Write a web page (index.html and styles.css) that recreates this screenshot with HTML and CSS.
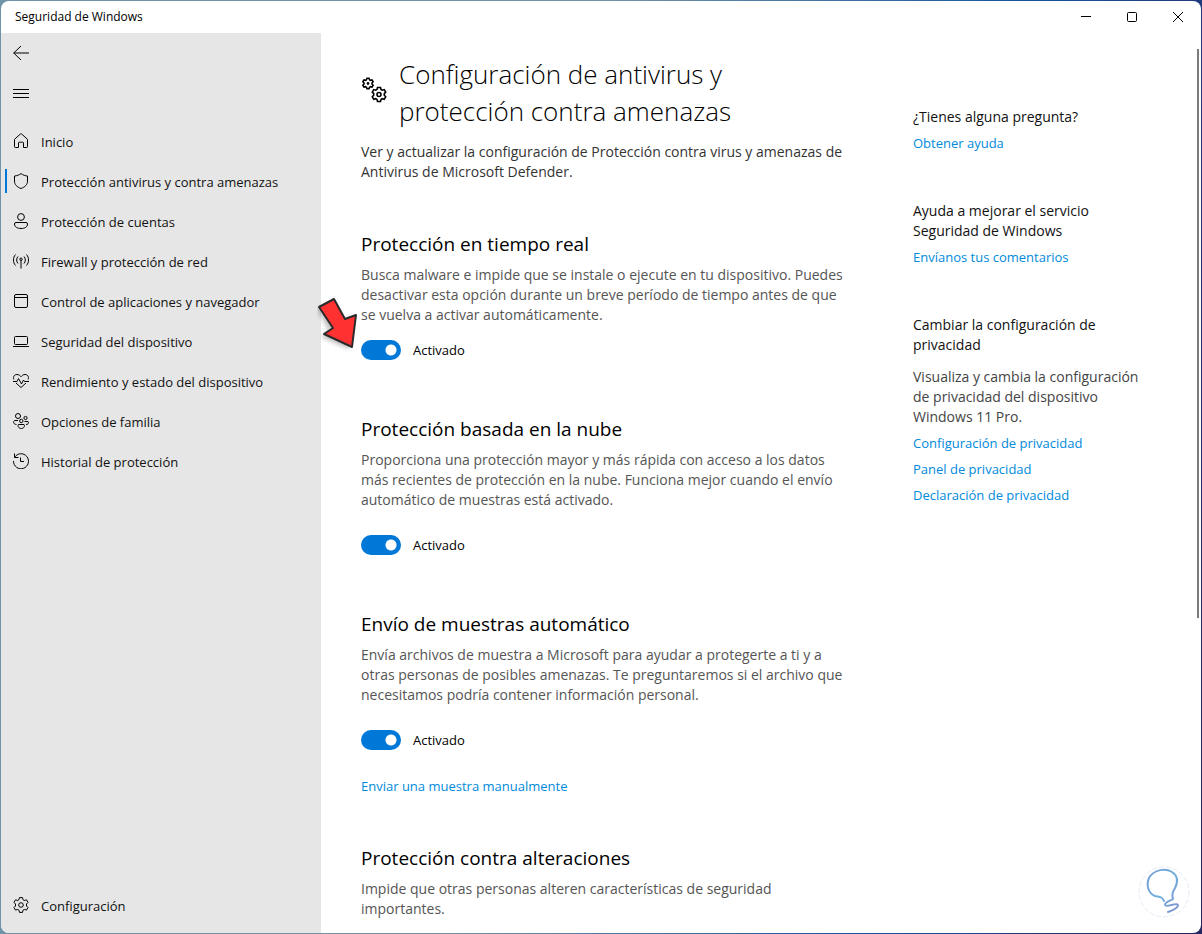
FILE: index.html
```html
<!DOCTYPE html>
<html lang="es">
<head>
<meta charset="utf-8">
<meta name="viewport" content="width=device-width, initial-scale=1">
<title>Seguridad de Windows</title>
<link rel="stylesheet" href="styles.css">
</head>
<body>
<div class="window">
  <header class="titlebar">
    <span class="app-name">Seguridad de Windows</span>
    <div class="window-controls">
      <button type="button" aria-label="Minimizar"><svg width="16" height="16" viewBox="0 0 16 16"><path d="M3 7.5h10"/></svg></button>
      <button type="button" aria-label="Maximizar"><svg width="16" height="16" viewBox="0 0 16 16"><rect x="3.5" y="3.5" width="9" height="9" rx="1"/></svg></button>
      <button type="button" aria-label="Cerrar"><svg width="16" height="16" viewBox="0 0 16 16"><path d="M3 3l10 10M13 3L3 13"/></svg></button>
    </div>
  </header>
  <div class="body">
    <nav class="sidebar" aria-label="Navegación">
      <button class="icon-button" type="button" aria-label="Atrás"><svg class="icon" viewBox="0 0 16 16"><path d="M16 8H.7M8 1L.7 8 8 15"/></svg></button>
      <button class="icon-button" type="button" aria-label="Menú"><svg class="icon" viewBox="0 0 16 16"><path d="M0 4.5h16M0 8.5h16M0 12.5h16"/></svg></button>
      <ul class="nav-list">
        <li><a class="nav-item" href="#inicio"><svg class="icon" viewBox="0 0 16 16"><path d="M1.500 6.300L7.400 1a.9.9 0 0 1 1.200 0l5.900 5.300V13.700a.8.8 0 0 1-.8.8h-3.200V10a.8.8 0 0 0-.8-.8H6.300a.8.8 0 0 0-.8.8v4.500H2.300a.8.8 0 0 1-.8-.8z"/></svg>Inicio</a></li>
        <li><a class="nav-item active" href="#antivirus" aria-current="page"><svg class="icon" viewBox="0 0 16 16"><path d="M8 .6c2 1.500 4.200 2.200 6.500 2.400V8c0 3.700-2.500 6-6.500 7.500C4 14 1.500 11.700 1.500 8V3C3.800 2.800 6 2.100 8 .6z"/></svg>Protección antivirus y contra amenazas</a></li>
        <li><a class="nav-item" href="#cuentas"><svg class="icon" viewBox="0 0 16 16"><circle cx="8" cy="4" r="3.400"/><path d="M3 9.500h10a1.500 1.500 0 0 1 1.500 1.500c0 3-2.800 4.500-6.500 4.500S1.500 14 1.500 11A1.500 1.500 0 0 1 3 9.500z"/></svg>Protección de cuentas</a></li>
        <li><a class="nav-item" href="#firewall"><svg class="icon" viewBox="0 0 16 16"><path d="M2.500 1.500c-2.700 3-2.700 8 0 11M13.500 1.500c2.700 3 2.700 8 0 11M5 3.500c-1.800 2-1.800 5 0 7M11 3.500c1.800 2 1.800 5 0 7M8 7v8.500"/><circle cx="8" cy="6.200" r="1.200"/></svg>Firewall y protección de red</a></li>
        <li><a class="nav-item" href="#control"><svg class="icon" viewBox="0 0 16 16"><rect x="1.500" y="1.500" width="13" height="13" rx="1.500"/><path d="M1.500 4.500h13"/></svg>Control de aplicaciones y navegador</a></li>
        <li><a class="nav-item" href="#dispositivo"><svg class="icon" viewBox="0 0 16 16"><rect x="1.500" y="3.500" width="13" height="8" rx="1"/><path d="M0 13.500h16"/></svg>Seguridad del dispositivo</a></li>
        <li><a class="nav-item" href="#rendimiento"><svg class="icon" viewBox="0 0 16 16"><path d="M.9 6.500C-.3 3.500 1.500 1.500 4 1.500c1.800 0 3 1 4 2.200 1-1.200 2.200-2.200 4-2.200 2.500 0 4.300 2 3.100 5M3 10l5 4.500 5-4.500M0 8.500h4l1.500-3 3 5.500 2-4 1 1.500H16"/></svg>Rendimiento y estado del dispositivo</a></li>
        <li><a class="nav-item" href="#familia"><svg class="icon" viewBox="0 0 16 16"><circle cx="5" cy="3" r="2.500"/><circle cx="12.500" cy="5" r="1.600"/><circle cx="8.300" cy="8" r="1.700"/><path d="M5 7.500H1.500c-2 1.500-.5 4 2 4M11.500 8.500h3.500c1.200 1.500 0 3.200-2 3M5.500 11.500h5.500c1.200 1.500 0 4-2.700 4s-4-2.500-2.800-4z"/></svg>Opciones de familia</a></li>
        <li><a class="nav-item" href="#historial"><svg class="icon" viewBox="0 0 16 16"><path d="M1.500 4.500A7.500 7.500 0 1 1 .5 8M1.500.500v4h4M7.500 4.500v4h3.500"/></svg>Historial de protección</a></li>
      </ul>
      <a class="nav-item settings" href="#configuracion"><svg class="icon" viewBox="0 0 16 16"><path d="M6.500 .6h3l.5 2.100 1.300.8 2.200-.7 1.500 2.600L13.500 7v2l1.500 1.500-1.500 2.600-2.200-.7-1.300.8-.5 2.200h-3L6 13.200l-1.300-.8-2.200.7L1 10.500 2.500 9V7L1 5.400l1.500-2.600 2.200.7L6 2.700z"/><circle cx="8" cy="8" r="2.300"/></svg>Configuración</a>
    </nav>
    <div class="page">
      <main class="content">
        <div class="page-title">
          <svg class="title-icon" viewBox="0 0 26 26"><path d="M16.500 10.500h3l.5 2 1.200.7 2-.6 1.500 2.500-1.400 1.500v1.700l1.400 1.500-1.500 2.500-2-.6-1.200.7-.5 2.100h-3l-.5-2.100-1.200-.7-2 .6-1.500-2.500 1.400-1.500v-1.700l-1.400-1.500 1.500-2.500 2 .6 1.200-.7z"/><circle cx="18" cy="17.500" r="2"/><path d="M6 1.300h2l.5 1.500.9.500 1.600-.4 1.100 1.800L11 6v1l1.100 1.300L11 10.100l-1.600-.4-.9.500-.5 1.500H6l-.5-1.500-.9-.5-1.600.4L1.900 8.300 3 7V6L1.900 4.700 3 2.900l1.600.4.900-.5z"/><circle cx="7" cy="6.500" r=".6"/></svg>
          <h1>Configuración de antivirus y protección contra amenazas</h1>
        </div>
        <p class="intro">Ver y actualizar la configuración de Protección contra virus y amenazas de Antivirus de Microsoft Defender.</p>

        <section class="setting compact">
          <h2>Protección en tiempo real</h2>
          <p>Busca malware e impide que se instale o ejecute en tu dispositivo. Puedes desactivar esta opción durante un breve período de tiempo antes de que se vuelva a activar automáticamente.</p>
          <div class="switch-row">
            <label class="switch"><input type="checkbox" role="switch" checked>Activado</label>
            <svg class="pointer" viewBox="0 0 44 56" aria-hidden="true"><path class="pointer-shadow" d="M0 13L16 5l10 19 10-4-4 33L4 41l8-6z"/><path class="pointer-arrow" d="M2 11L17 3l11 20 11-4-4 32L7 38l9-6z"/></svg>
          </div>
        </section>
        <section class="setting">
          <h2>Protección basada en la nube</h2>
          <p>Proporciona una protección mayor y más rápida con acceso a los datos más recientes de protección en la nube. Funciona mejor cuando el envío automático de muestras está activado.</p>
          <label class="switch"><input type="checkbox" role="switch" checked>Activado</label>
        </section>
        <section class="setting with-link">
          <h2>Envío de muestras automático</h2>
          <p>Envía archivos de muestra a Microsoft para ayudar a protegerte a ti y a otras personas de posibles amenazas. Te preguntaremos si el archivo que necesitamos podría contener información personal.</p>
          <label class="switch"><input type="checkbox" role="switch" checked>Activado</label>
          <a class="link" href="#muestra">Enviar una muestra manualmente</a>
        </section>
        <section class="setting">
          <h2>Protección contra alteraciones</h2>
          <p>Impide que otras personas alteren características de seguridad importantes.</p>
        </section>
      </main>
      <aside class="help">
        <section>
          <h3>¿Tienes alguna pregunta?</h3>
          <a class="link" href="#ayuda">Obtener ayuda</a>
        </section>
        <section>
          <h3>Ayuda a mejorar el servicio Seguridad de Windows</h3>
          <a class="link" href="#comentarios">Envíanos tus comentarios</a>
        </section>
        <section>
          <h3>Cambiar la configuración de privacidad</h3>
          <p>Visualiza y cambia la configuración de privacidad del dispositivo Windows 11 Pro.</p>
          <a class="link" href="#privacidad">Configuración de privacidad</a>
          <a class="link" href="#panel">Panel de privacidad</a>
          <a class="link" href="#declaracion">Declaración de privacidad</a>
        </section>
      </aside>
    </div>
  </div>
  <div class="scroll-thumb"></div>
  <svg class="watermark" viewBox="0 0 52 52" aria-hidden="true"><defs><linearGradient id="bulb" x1="0" y1="0" x2="1" y2="1"><stop offset="0" stop-color="#7a9fd6"/><stop offset=".5" stop-color="#6fb0dc"/><stop offset="1" stop-color="#7f8fd0"/></linearGradient></defs><circle class="ring" cx="26" cy="26" r="25"/><path class="bulb" d="M26 35C24 30 21 31 17 30 10 27 8 19 11 12 16 3 28 2 34 6c6 4 6 10 3 16-3 5-3 7-2 11-3 2-8 3-8 6 1 3 12-3 13 0 0 3-4 5-10 7"/></svg>
</div>
</body>
</html>
```
FILE: styles.css
```css
* { box-sizing: border-box; }

body {
  margin: 0;
  background: linear-gradient(100deg, #7093a8 0%, #7093a8 45%, #17539b 75%, #25265f 100%);
  font-family: "Open Sans", "Noto Sans", sans-serif;
  font-size: 13px;
  line-height: 20px;
  color: #111;
}

h1, h2, h3, p, ul { margin: 0; padding: 0; font-weight: 400; }
ul { list-style: none; }
a { color: inherit; text-decoration: none; }
button { border: 0; padding: 0; background: none; font: inherit; }
svg { fill: none; stroke: #000; flex: none; }

.window {
  position: relative;
  display: flex;
  flex-direction: column;
  height: calc(100vh - 2px);
  margin: 1px;
  border-radius: 8px;
  background: #fff;
  overflow: hidden;
}

.titlebar {
  display: flex;
  justify-content: space-between;
  flex: none;
  height: 32px;
  padding-left: 14px;
  line-height: 32px;
  font-size: 12px;
  color: #000;
}
.window-controls { display: flex; }
.window-controls button {
  display: grid;
  place-items: center;
  width: 46px;
}

.body { display: flex; flex: 1; min-height: 0; }

.sidebar {
  display: flex;
  flex-direction: column;
  flex: none;
  width: 320px;
  padding-bottom: 7px;
  background: #e6e6e6;
}
.icon-button {
  display: grid;
  place-items: center;
  width: 40px;
  height: 40px;
}
.icon { width: 16px; height: 16px; }
.nav-list { margin-top: 9px; }
.nav-item {
  position: relative;
  display: flex;
  align-items: center;
  gap: 12px;
  height: 40px;
  padding-left: 12px;
}
.nav-item .icon { margin-bottom: 2px; }
.nav-item.active::before {
  content: "";
  position: absolute;
  left: 4px;
  top: 7px;
  width: 2px;
  height: 24px;
  background: #0078d7;
}
.settings { margin-top: auto; }

.page {
  display: flex;
  flex: 1;
  gap: 60px;
  min-width: 0;
  padding: 23px 40px 0;
}
.content { flex: 0 1 492px; }

.page-title { display: flex; gap: 12px; }
.title-icon { width: 26px; height: 26px; margin-top: 21px; stroke-width: 1.6; }
h1 {
  max-width: 400px;
  font-size: 26px;
  font-weight: 300;
  line-height: 37px;
  color: #000;
}
.intro { margin: 12px 0 48px; font-size: 14px; color: #333; }

.setting { margin-bottom: 55px; }
.setting.with-link { margin-bottom: 48px; }
.setting h2 {
  margin-bottom: 7px;
  font-size: 19px;
  line-height: 28px;
  color: #000;
}
.setting p { margin-bottom: 25px; font-size: 14px; color: #555; }
.setting.compact p { margin-bottom: 15px; }
.setting .link { margin-top: 26px; }

.switch { display: flex; align-items: center; gap: 12px; color: #000; }
.switch input {
  appearance: none;
  width: 40px;
  height: 20px;
  margin: 0;
  border-radius: 10px;
  background: #9a9a9a radial-gradient(circle at 10px 10px, #fff 5px, transparent 6px);
}
.switch input:checked {
  background: #0078d7 radial-gradient(circle at 30px 10px, #fff 5px, transparent 6px);
}
.switch-row { position: relative; }
.pointer {
  position: absolute;
  left: -44px;
  top: -44px;
  width: 44px;
  height: 56px;
}
.pointer-shadow { fill: #000; stroke: none; opacity: .25; filter: blur(2px); }
.pointer-arrow { fill: #ff3131; stroke: #2b2b2b; stroke-width: 2; stroke-linejoin: round; }

.link {
  display: block;
  font-weight: 500;
  color: #008adc;
}

.help {
  display: flex;
  flex: 0 1 240px;
  flex-direction: column;
  gap: 48px;
  margin-top: 51px;
}
.help h3 { font-size: 14px; line-height: 20px; color: #111; }
.help p { margin-top: 12px; font-size: 14px; color: #444; }
.help .link { margin-top: 6px; }

.scroll-thumb {
  position: absolute;
  top: 48px;
  right: 2px;
  width: 2px;
  height: 61%;
  background: #7b7b7b;
}
.watermark {
  position: absolute;
  right: 11px;
  bottom: 15px;
  width: 52px;
  height: 52px;
}
.ring { stroke: #e3eaf5; stroke-dasharray: 5 2; }
.bulb { stroke: url(#bulb); stroke-width: 2; stroke-linecap: round; stroke-linejoin: round; }
```
